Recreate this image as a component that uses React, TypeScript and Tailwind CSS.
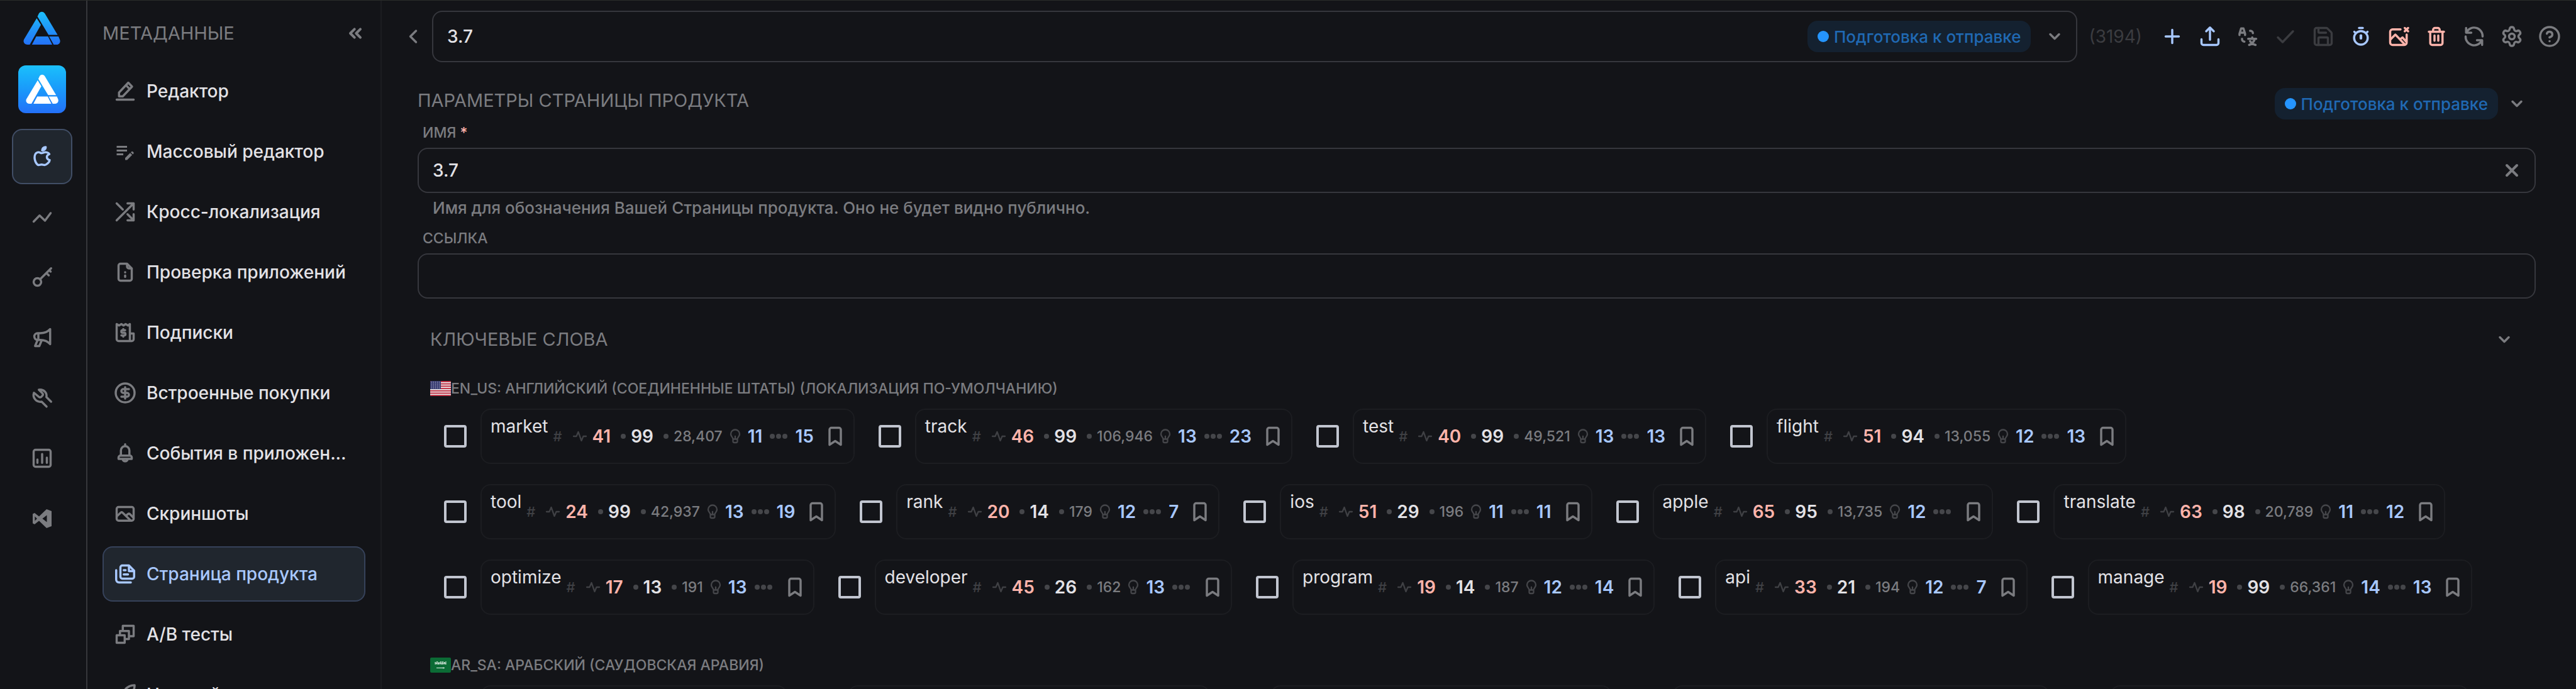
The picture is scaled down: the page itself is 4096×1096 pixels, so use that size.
import React, { useState } from 'react';
import {
  ChevronDown,
  ChevronLeft,
  ChevronsLeft,
  CircleDollarSign,
  CircleHelp,
  Rocket,
  Save,
  Settings,
  X,
} from 'lucide-react';
import { MdEditNote } from 'react-icons/md';

interface IconProps {
  className?: string;
  children?: React.ReactNode;
}

interface Keyword {
  word: string;
  popularity: number;
  difficulty: number;
  apps: string;
  suggestions: number;
  rank?: number;
}

const Icon: React.FC<IconProps> = ({ className = 'size-9', children }) => (
  <svg
    className={className}
    viewBox="0 0 24 24"
    fill="none"
    stroke="currentColor"
    strokeWidth={2.3}
    strokeLinecap="round"
    strokeLinejoin="round"
    aria-hidden="true"
  >
    {children}
  </svg>
);

const LogoShape: React.FC<{ fill: string; className?: string }> = ({ fill, className }) => (
  <svg className={className} viewBox="0 0 60 54" aria-hidden="true">
    <defs>
      <linearGradient id="logo-gradient" x1="0" y1="0" x2="0" y2="54" gradientUnits="userSpaceOnUse">
        <stop offset="0" stopColor="#1cc0fb" />
        <stop offset="1" stopColor="#2470f8" />
      </linearGradient>
    </defs>
    <g fill={fill}>
      <path d="M22.6 8.2 24.7 3.7C26.6-.2 32.2-.4 34.3 3.6L54.6 37.6H40.2z" />
      <path d="M21.4 11 28 21.6 10.3 53H6.6C1.8 53-1 48.3 1.4 44.2z" />
      <path d="M20.6 40H39.4L46 53H13.8z" />
      <path d="M41.2 40H56l1.9 4.4C60 48.6 57.3 53 53 53H48.4z" />
    </g>
  </svg>
);

const railIcons = [
  {
    label: 'App Store',
    icon: (
      <Icon>
        <path d="M8.3 7.4C5 7.4 4 10.4 4 13.1 4 16.3 6.1 21 8.3 21c1.2 0 1.8-.5 3.2-.5s1.6.5 3.2.5S20 18 20 15.8c-.5-.2-3-.6-3-3.3 0-2.1 2.2-2.9 2.6-3.1-1-1.5-2.8-2-4.2-2-1.5 0-2.7 1-3.9 1S9.5 7.4 8.3 7.4z" />
        <path d="M12 5.5C12 3.6 13.5 2 15.8 2c0 2-1.6 3.5-3.8 3.5z" />
      </Icon>
    ),
  },
  {
    label: 'Аналитика',
    icon: (
      <Icon>
        <path d="M3 17l6.3-6.5L15 16l6-8" />
      </Icon>
    ),
  },
  {
    label: 'Ключи',
    icon: (
      <Icon>
        <circle cx="7" cy="17" r="4" />
        <path d="M10 14L21.5 2.5M16.5 7.5l2.5 2.5M19.5 4.5l1.5 1.5" />
      </Icon>
    ),
  },
  {
    label: 'Продвижение',
    icon: (
      <Icon>
        <path d="M20.5 3v16c-3-3.5-6-4.5-10.5-4.5H7.3a3.6 3.6 0 0 1 0-7.2H10c4.5 0 7.5-1 10.5-4.3zM8 7.5v7M7 15l-2.5 6H9l2.5-6" />
      </Icon>
    ),
  },
  {
    label: 'Инструменты',
    icon: (
      <Icon>
        <path d="M21.5 16l-5-5c1-4-2.5-8.5-8-7.7L12.3 7a2 2 0 0 1 0 2.6l-1.2 1.2a2 2 0 0 1-2.6 0L3.3 6.5c-1.8 5.5 2.7 10.3 8.2 9.5l5.2 5.2" />
      </Icon>
    ),
  },
  {
    label: 'Отчёты',
    icon: (
      <Icon>
        <rect x="3" y="3" width="18" height="18" rx="2" />
        <path d="M7 13.3v3.5M12 7.5v9.3M17 11.3v5.5" />
      </Icon>
    ),
  },
  {
    label: 'Visual Studio',
    icon: (
      <Icon>
        <path
          d="M16.7 2 22 4v16l-5.3 2-8-7.7L4 18l-2-1V7l2-1 4.7 3.7zM17 8.3 12.3 12l4.7 3.7zM4.3 9.7v4.6L6.6 12z"
          fill="currentColor"
          fillRule="evenodd"
          stroke="none"
        />
      </Icon>
    ),
  },
];

const menuItems = [
  {
    label: 'Редактор',
    icon: (
      <Icon>
        <path d="M3 21h18M5.5 17.5v-4L15.3 3l4 4.2L9.5 17.5zM13 5.8l3.7 4" />
      </Icon>
    ),
  },
  { label: 'Массовый редактор', icon: <MdEditNote className="size-9" /> },
  {
    label: 'Кросс-локализация',
    icon: (
      <Icon>
        <path d="M3 3l6.5 6.5M3 21L21 3M14.5 3H21v6.5M14.5 14.5L21 21M21 14.5V21h-6.5" />
      </Icon>
    ),
  },
  {
    label: 'Проверка приложений',
    icon: (
      <Icon>
        <path d="M14 3H7a2 2 0 0 0-2 2v14a2 2 0 0 0 2 2h10a2 2 0 0 0 2-2V8zM14 3v3a2 2 0 0 0 2 2h3M12 12v.1M12 15.5V17" />
      </Icon>
    ),
  },
  {
    label: 'Подписки',
    icon: (
      <Icon>
        <path d="M17 21H5a2 2 0 0 1-2-2V3l2.5 1.5L8 3l2.3 1.5L12.5 3 15 4.5 17 3zM17 13h4v6a2 2 0 0 1-2 2h-2" />
        <path d="M12 9.5H9.3a1.2 1.2 0 0 0 0 2.7h1.6a1.2 1.2 0 0 1 0 2.8H8M10 8.3v1M10 15v1.3" />
      </Icon>
    ),
  },
  { label: 'Встроенные покупки', icon: <CircleDollarSign className="size-9" strokeWidth={2.3} /> },
  {
    label: 'События в приложен...',
    icon: (
      <Icon>
        <path d="M12 2.5V4M7.5 14.5V9a4.5 4.5 0 0 1 9 0v5.5M5 18v-1.5a2 2 0 0 1 2-2h10a2 2 0 0 1 2 2V18zM9.5 18.5a2.5 2 0 0 0 5 0" />
      </Icon>
    ),
  },
  {
    label: 'Скриншоты',
    icon: (
      <Icon>
        <rect x="3" y="5" width="18" height="14.5" rx="2" />
        <path d="M3.5 14.5L7.3 11a1.5 1.5 0 0 1 2 0l8.2 8M13 14l2-1.5a1.5 1.5 0 0 1 2 0l3.5 3.5" />
      </Icon>
    ),
  },
  {
    label: 'Страница продукта',
    icon: (
      <Icon>
        <path d="M2.5 8v10a3 3 0 0 0 3 3H18M9 3h7l5.5 5.5V15a2 2 0 0 1-2 2H9a2 2 0 0 1-2-2V5a2 2 0 0 1 2-2zM16 3.5V9h5M10.5 8h2M10.5 12.5H15" />
      </Icon>
    ),
  },
  {
    label: 'A/B тесты',
    icon: (
      <Icon>
        <path d="M3 13h8.5v8H3zM6.5 13V8.5h9.5V17h-4.5M9.5 8.5V3H21v11h-5" />
      </Icon>
    ),
  },
  { label: 'Настройки', icon: <Rocket className="size-9" strokeWidth={2.3} /> },
];

const toolbar = [
  {
    label: 'Добавить',
    color: 'text-[#a8c8ff]',
    icon: (
      <Icon>
        <path d="M12 5v14M5 12h14" />
      </Icon>
    ),
  },
  {
    label: 'Загрузить',
    color: 'text-[#a8c8ff]',
    icon: (
      <Icon>
        <path d="M12 3v12.5M8 6.5L12 2.5l4 4M3 15v4a2 2 0 0 0 2 2h14a2 2 0 0 0 2-2v-4" />
      </Icon>
    ),
  },
  {
    label: 'Перевести',
    color: 'text-[#7b7c80]',
    icon: (
      <Icon>
        <path d="M3.3 10.5V9L5 3.5h2.5L9.2 9v1.5M4 8h4.5M14.5 6H15a2.5 2.5 0 0 1 2.5 2.5M6 14.5V15a2.5 2.5 0 0 0 2.5 2.5" />
        <path d="M12.5 14.5H21M16.8 13v1.5M19.5 14.5c-.8 3-3 5.5-6 6.5M14.5 17c1.3 2 3.3 3.4 5.8 4" />
      </Icon>
    ),
  },
  {
    label: 'Применить',
    color: 'text-[#3b3c40]',
    icon: (
      <Icon>
        <path d="M4 13l5 5L20 6.5" />
      </Icon>
    ),
  },
  { label: 'Сохранить', color: 'text-[#3b3c40]', icon: <Save className="size-9" strokeWidth={2.3} /> },
  {
    label: 'Таймер',
    color: 'text-[#a8c8ff]',
    icon: (
      <Icon>
        <circle cx="12" cy="13.5" r="7.2" />
        <path d="M10 3h4M5.5 7.5L5 7M18.5 7.5L19 7" />
        <path d="M12 11v3" strokeWidth={2.8} />
      </Icon>
    ),
  },
  {
    label: 'Удалить изображения',
    color: 'text-[#ffb4ab]',
    icon: (
      <Icon>
        <path d="M14 4.5H5.5A2.5 2.5 0 0 0 3 7v11.5A2.5 2.5 0 0 0 5.5 21H18a2.5 2.5 0 0 0 2.5-2.5V10" />
        <path d="M3.5 15l5-5 10 10.5M13.5 15l2.5-2 4 4.5M18.5 3l3.5 3.5M22 3l-3.5 3.5" />
      </Icon>
    ),
  },
  {
    label: 'Удалить',
    color: 'text-[#ffb4ab]',
    icon: (
      <Icon>
        <path d="M4 7h16M8.5 6.5V5a2 2 0 0 1 2-2h3a2 2 0 0 1 2 2v1.5M5.5 7.5V19a2 2 0 0 0 2 2h9a2 2 0 0 0 2-2V7.5M10 11v5.5M14 11v5.5" />
      </Icon>
    ),
  },
  {
    label: 'Обновить',
    color: 'text-[#7b7c80]',
    icon: (
      <Icon>
        <path d="M3.5 3v5H9M4 7.5a9 9 0 0 1 17 4.5M20.5 21v-5H15M20 16.5A9 9 0 0 1 3 12" />
      </Icon>
    ),
  },
  { label: 'Настройки', color: 'text-[#7b7c80]', icon: <Settings className="size-9" strokeWidth={2.3} /> },
  { label: 'Помощь', color: 'text-[#7b7c80]', icon: <CircleHelp className="size-9" strokeWidth={2.3} /> },
];

const englishKeywords: Keyword[][] = [
  [
    { word: 'market', popularity: 41, difficulty: 99, apps: '28,407', suggestions: 11, rank: 15 },
    { word: 'track', popularity: 46, difficulty: 99, apps: '106,946', suggestions: 13, rank: 23 },
    { word: 'test', popularity: 40, difficulty: 99, apps: '49,521', suggestions: 13, rank: 13 },
    { word: 'flight', popularity: 51, difficulty: 94, apps: '13,055', suggestions: 12, rank: 13 },
  ],
  [
    { word: 'tool', popularity: 24, difficulty: 99, apps: '42,937', suggestions: 13, rank: 19 },
    { word: 'rank', popularity: 20, difficulty: 14, apps: '179', suggestions: 12, rank: 7 },
    { word: 'ios', popularity: 51, difficulty: 29, apps: '196', suggestions: 11, rank: 11 },
    { word: 'apple', popularity: 65, difficulty: 95, apps: '13,735', suggestions: 12 },
    { word: 'translate', popularity: 63, difficulty: 98, apps: '20,789', suggestions: 11, rank: 12 },
  ],
  [
    { word: 'optimize', popularity: 17, difficulty: 13, apps: '191', suggestions: 13 },
    { word: 'developer', popularity: 45, difficulty: 26, apps: '162', suggestions: 13 },
    { word: 'program', popularity: 19, difficulty: 14, apps: '187', suggestions: 12, rank: 14 },
    { word: 'api', popularity: 33, difficulty: 21, apps: '194', suggestions: 12, rank: 7 },
    { word: 'manage', popularity: 19, difficulty: 99, apps: '66,361', suggestions: 14, rank: 13 },
  ],
];

const arabicCardWidths = ['w-[488px]', 'w-[576px]', 'w-[543px]', 'w-[600px]', 'w-[571px]'];

const StatusPill: React.FC = () => (
  <span className="flex h-[50px] shrink-0 items-center gap-2 rounded-2xl bg-[#142130] px-4 text-[26px] font-medium text-[#2069b3]">
    <span className="size-[18px] rounded-full bg-[#2595ff]" />
    Подготовка к отправке
  </span>
);

const Chevron: React.FC = () => (
  <span className="flex size-9 items-center justify-center text-[#7b7c80]">
    <ChevronDown className="size-7" strokeWidth={3} />
  </span>
);

const Dot: React.FC = () => <span className="size-2 rounded-full bg-[#45464a]" />;

const KeywordCard: React.FC<{ keyword: Keyword }> = ({ keyword }) => {
  const [checked, setChecked] = useState(false);

  return (
    <li className="flex shrink-0 items-center">
      <span className="flex w-20 justify-center">
        <input
          type="checkbox"
          aria-label={keyword.word}
          checked={checked}
          onChange={() => setChecked(!checked)}
          className="size-9 appearance-none rounded-sm border-4 border-[#c2c6d0] checked:bg-[#a8c8ff]"
        />
      </span>
      <div className="flex h-22 items-center rounded-2xl border-2 border-[#1c1d21] pr-[11px] pl-[14px] text-[28px] font-semibold">
        <span className="mt-[10px] self-start leading-8 font-normal text-[#e3e2e6]">{keyword.word}</span>
        <span className="ml-2 text-[22px] font-medium text-[#3f4044]">#</span>
        <Icon className="ml-4 size-6 text-[#3f4044]">
          <path d="M2 12h4.5l3-7 5 14 3-7H22" />
        </Icon>
        <span className="ml-2 text-[#ffb4ab]">{keyword.popularity}</span>
        <span className="ml-4 flex items-center gap-2">
          <Dot />
          <span className="text-[#e3e2e6]">{keyword.difficulty}</span>
        </span>
        <span className="ml-4 flex items-center gap-2">
          <Dot />
          <span className="text-[23px] font-medium text-[#7b7c80]">{keyword.apps}</span>
        </span>
        <Icon className="ml-2 size-6 text-[#45464a]">
          <path d="M8.5 16.5c0-3-3.5-4-3.5-8a7 7 0 0 1 14 0c0 4-3.5 5-3.5 8zM8.5 17v3a2 2 0 0 0 2 2h3a2 2 0 0 0 2-2v-3M12 12v4" />
        </Icon>
        <span className="ml-2 text-[#a8c8ff]">{keyword.suggestions}</span>
        <span className="ml-3 flex gap-[2px]">
          <Dot />
          <Dot />
          <Dot />
        </span>
        {keyword.rank && <span className="ml-3 text-[#a8c8ff]">{keyword.rank}</span>}
        <button
          type="button"
          aria-label="Закладка"
          className={`text-[#7b7c80] ${keyword.rank ? 'ml-4' : 'ml-[18px]'}`}
        >
          <Icon>
            <path d="M18 21l-6-4-6 4V5a2 2 0 0 1 2-2h8a2 2 0 0 1 2 2z" />
          </Icon>
        </button>
      </div>
    </li>
  );
};

const UsFlag: React.FC = () => (
  <svg className="h-6 w-[33px] rounded-xs" viewBox="0 0 33 24" aria-hidden="true">
    <rect width="33" height="24" fill="#e8e4e6" />
    {[0, 1, 2, 3, 4, 5, 6].map((i) => (
      <rect key={i} y={i * 3.7} width="33" height="1.85" fill="#c0283c" />
    ))}
    <rect width="17" height="13" fill="#3c3f74" />
    {[2, 5, 8, 11].map((y) => (
      <path key={y} d={`M2 ${y}h14`} stroke="#d5d6e4" strokeWidth="1" strokeDasharray="1 2" />
    ))}
  </svg>
);

const SaudiFlag: React.FC = () => (
  <svg className="h-6 w-[33px] rounded-xs" viewBox="0 0 33 24" aria-hidden="true">
    <rect width="33" height="24" fill="#0b6b35" />
    <path
      d="M8 11V7l2 3 1-4 2 5 1-4 2 3 1-4 2 5 1-5 2 4 1-3 2 4V6M8 10h16"
      fill="none"
      stroke="#d5e6dc"
      strokeWidth="1"
    />
    <path d="M10 16.5h13M21 15.5v2" stroke="#e6f0ea" strokeWidth="1.2" />
  </svg>
);

export default function App() {
  const [active, setActive] = useState('Страница продукта');
  const [name, setName] = useState('3.7');
  const [link, setLink] = useState('');

  return (
    <div className="flex h-screen overflow-hidden border-t border-[#2a2c2a] bg-[#131418] font-['Inter',sans-serif] text-[28px] text-[#e3e2e6]">
      <aside className="flex w-[139px] shrink-0 flex-col border-r-2 border-[#36373b] pt-[17px] pl-[19px]">
        <div className="flex w-24 flex-col items-center">
          <LogoShape fill="url(#logo-gradient)" className="h-[54px] w-[60px]" />
          <div className="mt-8 flex size-[76px] items-center justify-center rounded-xl bg-linear-to-b from-[#1cc0fb] to-[#2470f8]">
            <LogoShape fill="#ffffff" className="h-12 w-[53px]" />
          </div>
        </div>
        <nav className="mt-[25px] flex flex-col gap-2">
          {railIcons.map((item, index) => (
            <button
              key={item.label}
              type="button"
              aria-label={item.label}
              className={`flex h-22 w-24 items-center justify-center rounded-2xl border-2 ${
                index === 0 ? 'border-[#414e66] bg-[#20262e] text-[#a8c8ff]' : 'border-transparent text-[#7b7c80]'
              }`}
            >
              {item.icon}
            </button>
          ))}
        </nav>
      </aside>

      <aside className="w-[468px] shrink-0 border-r-2 border-[#1c1d21] px-6">
        <div className="flex h-[104px] items-center justify-between text-[29px] text-[#7b7c80]">
          <h2>МЕТАДАННЫЕ</h2>
          <button type="button" aria-label="Свернуть">
            <ChevronsLeft className="size-8" strokeWidth={3} />
          </button>
        </div>
        <nav className="-mt-1 flex flex-col gap-2">
          {menuItems.map((item) => (
            <button
              key={item.label}
              type="button"
              onClick={() => setActive(item.label)}
              className={`flex h-22 shrink-0 items-center gap-4 rounded-2xl border-2 px-4 text-left font-medium whitespace-nowrap ${
                item.label === active
                  ? 'border-[#36425a] bg-[#20262e] text-[#a8c8ff]'
                  : 'border-transparent text-[#e3e2e6]'
              }`}
            >
              <span className={item.label === active ? 'text-[#a8c8ff]' : 'text-[#7b7c80]'}>{item.icon}</span>
              {item.label}
            </button>
          ))}
        </nav>
      </aside>

      <main className="min-w-0 flex-1">
        <header className="flex items-center pt-4 pr-6 pl-8">
          <button type="button" aria-label="Назад" className="text-[#7b7c80]">
            <ChevronLeft className="size-9" strokeWidth={2.3} />
          </button>
          <div className="ml-3 flex h-[82px] flex-1 items-center rounded-2xl border-2 border-[#36373d] pr-4 pl-[22px]">
            <select aria-label="Страница" className="flex-1 appearance-none bg-transparent font-medium outline-none">
              <option>3.7</option>
            </select>
            <StatusPill />
            <span className="ml-5">
              <Chevron />
            </span>
          </div>
          <span className="ml-[18px] text-[#3b3c40]">(3194)</span>
          <div className="ml-[30px] flex gap-6">
            {toolbar.map((item) => (
              <button key={item.label} type="button" aria-label={item.label} className={item.color}>
                {item.icon}
              </button>
            ))}
          </div>
        </header>

        <section className="mt-[41px] pr-16 pl-[57px]">
          <div className="flex items-start justify-between">
            <h2 className="text-[29px] leading-10 text-[#7b7c80]">ПАРАМЕТРЫ СТРАНИЦЫ ПРОДУКТА</h2>
            <div className="flex items-center gap-3 pr-3">
              <StatusPill />
              <button type="button" aria-label="Свернуть параметры">
                <Chevron />
              </button>
            </div>
          </div>
          <label htmlFor="page-name" className="mt-[5px] ml-2 block text-[23px] leading-8 font-medium text-[#7b7c80]">
            ИМЯ <span className="text-[#ffb4ab]">*</span>
          </label>
          <div className="mt-2 flex h-18 items-center rounded-2xl border-2 border-[#36373d] pr-5 pl-[22px]">
            <input
              id="page-name"
              type="text"
              value={name}
              onChange={(e) => setName(e.target.value)}
              className="flex-1 bg-transparent font-medium outline-none"
            />
            <button type="button" aria-label="Очистить" onClick={() => setName('')} className="text-[#7b7c80]">
              <X className="size-8" strokeWidth={3} />
            </button>
          </div>
          <p className="mt-2 ml-6 text-[26px] leading-8 font-medium text-[#7b7c80]">
            Имя для обозначения Вашей Страницы продукта. Оно не будет видно публично.
          </p>
          <label htmlFor="page-link" className="mt-4 ml-2 block text-[23px] leading-8 font-medium text-[#7b7c80]">
            ССЫЛКА
          </label>
          <input
            id="page-link"
            type="text"
            value={link}
            onChange={(e) => setLink(e.target.value)}
            className="mt-2 block h-18 w-full rounded-2xl border-2 border-[#36373d] bg-transparent px-[22px] font-medium outline-none"
          />
        </section>

        <section className="mt-[45px] pr-24 pl-[77px]">
          <div className="flex items-center justify-between text-[#7b7c80]">
            <h2 className="text-[29px] leading-10">КЛЮЧЕВЫЕ СЛОВА</h2>
            <button type="button" aria-label="Свернуть ключевые слова">
              <Chevron />
            </button>
          </div>
          <h3 className="mt-[42px] flex items-center text-[23px] leading-8 font-medium text-[#7b7c80]">
            <UsFlag />
            EN_US: АНГЛИЙСКИЙ (СОЕДИНЕННЫЕ ШТАТЫ) (ЛОКАЛИЗАЦИЯ ПО-УМОЛЧАНИЮ)
          </h3>
          <div className="mt-4 flex flex-col gap-8">
            {englishKeywords.map((row, index) => (
              <ul key={index} className="flex gap-4">
                {row.map((keyword) => (
                  <KeywordCard key={keyword.word} keyword={keyword} />
                ))}
              </ul>
            ))}
          </div>
          <h3 className="mt-16 flex items-center text-[23px] leading-8 font-medium text-[#7b7c80]">
            <SaudiFlag />
            AR_SA: АРАБСКИЙ (САУДОВСКАЯ АРАВИЯ)
          </h3>
          <div className="mt-4 flex gap-24 pl-20">
            {arabicCardWidths.map((width) => (
              <div key={width} className={`h-22 shrink-0 rounded-2xl border-2 border-[#1c1d21] ${width}`} />
            ))}
          </div>
        </section>
      </main>
    </div>
  );
}
